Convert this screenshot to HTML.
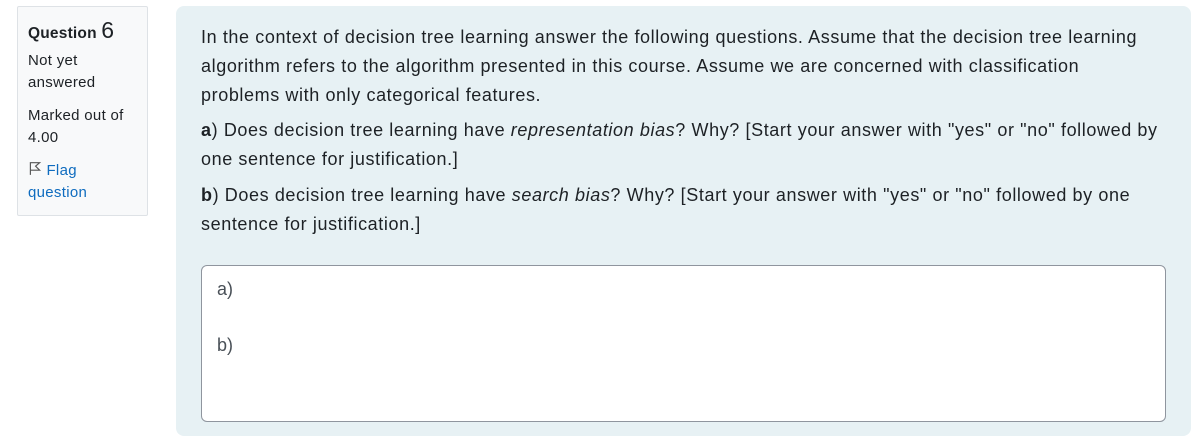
<!DOCTYPE html>
<html><head><style>
body{margin:0;width:1191px;height:427px;background:#fff;font-family:"Liberation Sans",sans-serif;color:#1d2125;overflow:hidden;position:relative}
.info{position:absolute;left:17px;top:6px;width:131px;height:210px;border:1px solid #dee2e6;background:#f8f9fa;border-radius:2px;box-sizing:border-box;padding:10px 10px}
.info h3{margin:0;font-size:15.5px;font-weight:bold;letter-spacing:0.2px}
.info h3 span{font-size:23px;font-weight:normal}
.info p{margin:0;font-size:15px;line-height:22px;letter-spacing:0.3px}
.content{position:absolute;left:176px;top:6px;width:1015px;height:430px;background:#e7f1f4;border-radius:8px}
.q{position:absolute;left:25px;top:17px;width:965px;font-size:18px;line-height:28.8px;letter-spacing:0.6px}
.q p{margin:0 0 7px}
.ta{position:absolute;left:25px;top:259px;width:965px;height:157px;background:#fff;border:1px solid #8f959e;border-radius:6px;box-sizing:border-box;padding:9px 15px;font-size:18px;line-height:28px;color:#495057}
</style></head><body>
<div class="info">
<h3>Question <span>6</span></h3>
<p style="margin-top:6px">Not yet<br>answered</p>
<p style="margin-top:11px">Marked out of<br>4.00</p>
<p style="margin-top:11px;color:#0f6cbf"><svg width="14" height="15" viewBox="0 0 12 13" style="vertical-align:-1px"><path d="M2 12V1.5h8L6.5 4.5 10 8H2" fill="none" stroke="#555" stroke-width="1"/></svg> Flag<br>question</p>
</div>
<div class="content">
<div class="q">
<p>In the context of decision tree learning answer the following questions. Assume that the decision tree learning<br>algorithm refers to the algorithm presented in this course. Assume we are concerned with classification<br>problems with only categorical features.</p>
<p><b>a</b>) Does decision tree learning have <i>representation bias</i>? Why? [Start your answer with "yes" or "no" followed by<br>one sentence for justification.]</p>
<p><b>b</b>) Does decision tree learning have <i>search bias</i>? Why? [Start your answer with "yes" or "no" followed by one<br>sentence for justification.]</p>
</div>
<div class="ta">a)<br><br>b)</div>
</div>
</body></html>
